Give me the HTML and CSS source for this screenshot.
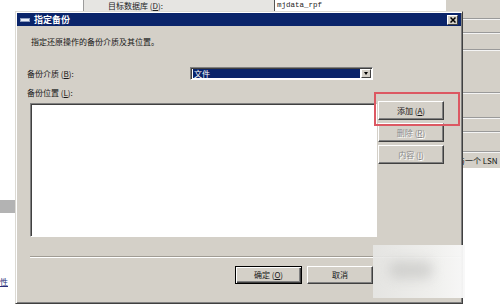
FILE: index.html
```html
<!DOCTYPE html>
<html lang="zh">
<head>
<meta charset="utf-8">
<link rel="stylesheet" href="styles.css">
</head>
<body>
<div class="desktop">
  <div class="bg-top">
    <div class="bg-top-left"></div>
    <div class="bg-top-mid"><span>目标数据库 (<u>D</u>):</span></div>
    <div class="bg-top-field">mjdata_rpf</div>
  </div>
  <div class="bg-right">
    <div class="rrow h18"></div>
    <div class="rrow h13"></div>
    <div class="rrow h16"></div>
    <div class="rrow h42"></div>
    <div class="rrow h24"></div>
    <div class="rrow h13"></div>
    <div class="rrow h19"></div>
    <div class="rtext">与一个 LSN</div>
  </div>
  <div class="bg-left-block"></div>
  <div class="bg-left-link">性</div>

  <div class="dialog">
    <div class="titlebar">
      <span class="ticon"></span>
      <span class="ttext">指定备份</span>
      <span class="tclose">
        <svg width="6" height="6" viewBox="0 0 6 6"><path d="M0.5 0.5 L5.5 5.5 M5.5 0.5 L0.5 5.5" stroke="#000" stroke-width="1.5"/></svg>
      </span>
    </div>
    <div class="dbody">
      <div class="desc">指定还原操作的备份介质及其位置。</div>
      <div class="field-row">
        <span class="label">备份介质 (<u>B</u>):</span>
        <div class="combo">
          <div class="combo-sel">文件</div>
          <div class="combo-btn"><span class="tri"></span></div>
        </div>
      </div>
      <div class="label label2">备份位置 (<u>L</u>):</div>
      <div class="list-row">
        <div class="listbox"></div>
        <div class="side-buttons">
          <div class="btn">添加 (<u>A</u>)</div>
          <div class="btn disabled">删除 (<u>R</u>)</div>
          <div class="btn disabled">内容 (<u>I</u>)</div>
        </div>
      </div>
      <div class="separator"></div>
      <div class="bottom-row">
        <div class="btn default wide">确定 (<u>O</u>)</div>
        <div class="btn wide">取消</div>
      </div>
    </div>
  </div>

  <div class="highlight"></div>
  <div class="watermark"><span class="smudge"></span></div>
</div>
</body>
</html>
```

FILE: styles.css
```css
* { box-sizing: border-box; margin: 0; padding: 0; }
html, body { width: 500px; height: 307px; overflow: hidden; background: #fff; }
body {
  font-family: "Noto Sans CJK SC", "Liberation Sans", sans-serif;
  font-size: 8px;
  color: #161616;
}
u { text-decoration: underline; text-underline-offset: 1px; }

.desktop { position: relative; width: 500px; height: 307px; }

/* background window: top strip */
.bg-top { position: absolute; left: 0; top: 0; width: 470px; height: 12px; display: flex; }
.bg-top-left { width: 84px; background: #fff; border-right: 1px solid #9c9c9c; }
.bg-top-mid {
  width: 190px; background: #e6e5e2; display: flex; align-items: center;
  padding-left: 24px; line-height: 12px; color: #222;
}
.bg-top-field {
  flex: 1; background: #fff; border-left: 1px solid #555; padding-left: 2px;
  font-family: "Liberation Mono", monospace; font-size: 7.5px; line-height: 11px; color: #222;
}

/* background window: right side */
.bg-right {
  position: absolute; left: 446px; top: 0; width: 54px; height: 167px;
  background: #d4d0c8; display: flex; flex-direction: column;
}
.rrow { border-bottom: 1px solid #9a9a9a; box-shadow: 0 1px 0 #f4f4f4; flex: none; }
.h18 { height: 19px; }
.h13 { height: 14px; }
.h16 { height: 17px; }
.h42 { height: 43px; }
.h24 { height: 25px; }
.h19 { height: 20px; }
.rtext {
  margin-top: 2px; padding-left: 11px; line-height: 14px; height: 15px;
  color: #111; white-space: nowrap; background: #d4d0c8;
}

.bg-left-block { position: absolute; left: 0; top: 200px; width: 15px; height: 13px; background: #b3b3b3; }
.bg-left-link {
  position: absolute; left: 0; top: 276px; line-height: 12px;
  color: #2a2f7a; text-decoration: underline;
}

/* dialog */
.dialog {
  position: absolute; left: 15px; top: 11px; width: 448px; height: 293px;
  background: #d4d0c8;
  border: 1px solid; border-color: #dcdad4 #404040 #404040 #dcdad4;
  box-shadow: inset 1px 1px 0 #fff, inset -1px -1px 0 #808080;
  padding: 1px;
  display: flex; flex-direction: column;
}
.titlebar {
  height: 13px; background: #0a246a; display: flex; align-items: center;
  padding: 0 3px 0 3px; flex: none;
}
.ticon {
  width: 10px; height: 4px; background: #e9eef8; border: 1px solid #8c9bbd;
}
.ttext { margin-left: 4px; color: #fff; font-weight: bold; font-size: 9px; line-height: 12px; }
.tclose {
  margin-left: auto; width: 11px; height: 10px; background: #d4d0c8;
  border: 1px solid; border-color: #fff #404040 #404040 #fff;
  display: flex; align-items: center; justify-content: center;
}

.dbody {
  flex: 1; display: flex; flex-direction: column;
  padding: 10px 17px 0 13px;
}
.desc { margin-left: 1px; line-height: 12px; height: 12px; }
.field-row { margin-top: 19px; height: 13px; display: flex; align-items: center; }
.label { line-height: 12px; margin-left: -3px; }
.field-row .label { width: 163px; flex: none; }
.label2 { margin-top: 7px; height: 12px; }

.combo {
  width: 183px; height: 13px; display: flex; background: #fff;
  border: 1px solid; border-color: #808080 #fff #fff #808080;
  box-shadow: inset 1px 1px 0 #404040;
  padding: 1px 1px 1px 2px;
}
.combo-sel { flex: 1; background: #0a246a; color: #fff; line-height: 9px; padding-left: 1px; font-size: 8px; }
.combo-btn {
  width: 10px; background: #d4d0c8; margin-left: 1px;
  border: 1px solid; border-color: #fff #404040 #404040 #fff;
  display: flex; align-items: center; justify-content: center;
}
.tri { width: 0; height: 0; border-left: 2.5px solid transparent; border-right: 2.5px solid transparent; border-top: 3px solid #000; }

.list-row { margin-top: 2px; display: flex; align-items: flex-start; }
.listbox {
  margin-top: 2px; width: 347px; height: 134px; background: #fff;
  border: 1px solid; border-color: #808080 #fff #fff #808080;
  box-shadow: inset 1px 1px 0 #404040;
}
.side-buttons { margin-left: 1px; width: 66px; display: flex; flex-direction: column; gap: 3px; }

.btn {
  height: 19px; background: #d4d0c8; display: flex; align-items: center; justify-content: center;
  border: 1px solid; border-color: #fff #404040 #404040 #fff;
  box-shadow: inset -1px -1px 0 #808080;
  line-height: 12px; color: #161616;
}
.btn.disabled { color: #8a8a8a; text-shadow: 1px 1px 0 #fff; }
.btn.default {
  border-color: #000;
  box-shadow: inset 1px 1px 0 #fff, inset -1px -1px 0 #404040, inset -2px -2px 0 #808080;
}
.btn.wide { height: 18px; }

.separator {
  margin-top: 19px; margin-right: -17px; height: 2px;
  border-top: 1px solid #a09c94; border-bottom: 1px solid #fff;
}
.bottom-row { margin-top: 8px; margin-left: 205px; display: flex; gap: 5px; }
.bottom-row .btn:first-child { width: 67px; }
.bottom-row .btn:last-child { width: 66px; }

/* overlays */
.highlight {
  position: absolute; left: 374px; top: 92px; width: 86px; height: 34px;
  border: 2px solid #dc5862;
}
.watermark {
  position: absolute; left: 373px; top: 245px; width: 92px; height: 53px;
  background: linear-gradient(90deg, rgba(230,230,228,0.92), rgba(240,240,238,0.94) 60%, rgba(248,248,248,0.97));
  overflow: hidden;
}
.smudge {
  position: absolute; left: 16px; top: 16px; width: 44px; height: 18px;
  background: rgba(185,185,183,0.5); filter: blur(6px); border-radius: 8px;
}
```
